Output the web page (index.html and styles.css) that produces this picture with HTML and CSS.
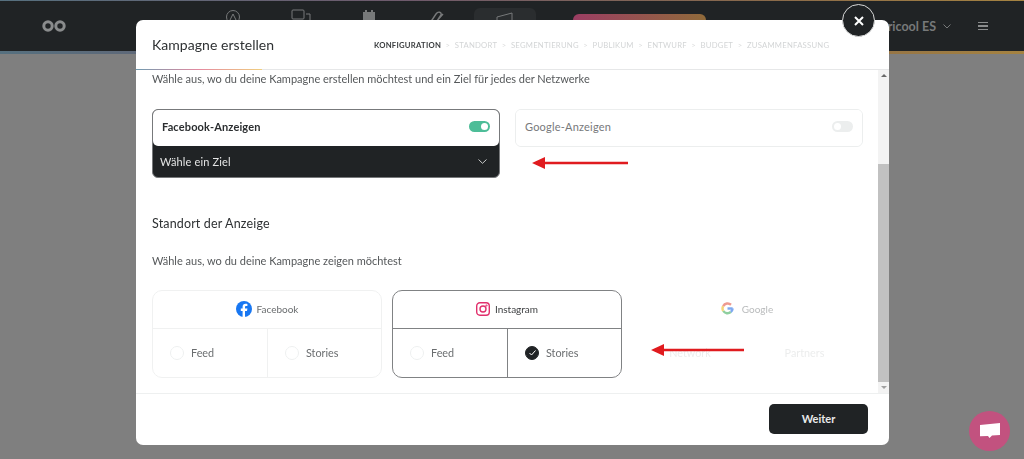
FILE: index.html
```html
<!DOCTYPE html>
<html lang="de">
<head>
    <meta charset="UTF-8">
    <meta name="viewport" content="width=device-width, initial-scale=1.0">
    <title>Kampagne erstellen</title>
    <link rel="stylesheet" href="styles.css">
</head>
<body>
    <header class="topbar">
        <svg class="logo" width="24" height="12" viewBox="0 0 24 12" fill="none" stroke="#8a8c8d" stroke-width="3"><circle cx="6" cy="6" r="4.2"/><circle cx="18" cy="6" r="4.2"/></svg>
        <nav class="topnav">
            <span class="nav-item"><svg width="16" height="16" viewBox="0 0 16 16" fill="none" stroke="#77797a"><circle cx="8" cy="8" r="6.5"/><path d="M5 11l3-6 3 6"/></svg></span>
            <span class="nav-item"><svg width="20" height="16" viewBox="0 0 20 16" fill="none" stroke="#77797a"><rect x="1" y="1" width="12" height="9" rx="1"/><path d="M15 5h4v8h-4"/></svg></span>
            <span class="nav-item"><svg width="14" height="16" viewBox="0 0 14 16" fill="#77797a"><path d="M1 3h12v12H1zM3 1h2v3H3zM9 1h2v3H9z"/></svg></span>
            <span class="nav-item"><svg width="20" height="16" viewBox="0 0 20 16" fill="none" stroke="#77797a" stroke-width="1.4"><path d="M3 14L9 5c2-3 6-2 5 1l-4 6M8 14l8-9"/></svg></span>
            <span class="nav-item active"><svg width="18" height="16" viewBox="0 0 18 16" fill="none" stroke="#77797a"><path d="M1 6l15-4v11L1 10z"/></svg></span>
        </nav>
        <div class="upgrade"></div>
        <div class="account">Metricool ES <svg width="8" height="5" viewBox="0 0 8 5" fill="none" stroke="#77797a"><path d="M0.5 0.5L4 4l3.5-3.5"/></svg></div>
        <div class="burger"><i></i><i></i><i></i></div>
    </header>

    <div class="overlay">
        <div class="modal">
            <button class="modal-close" aria-label="Schließen"><svg width="10" height="10" viewBox="0 0 10 10" stroke="#fff" stroke-width="2"><path d="M1 1l8 8M9 1L1 9"/></svg></button>
            <div class="modal-header">
                <h2 class="modal-title">Kampagne erstellen</h2>
                <ol class="steps">
                    <li class="current">Konfiguration</li>
                    <li>Standort</li>
                    <li>Segmentierung</li>
                    <li>Publikum</li>
                    <li>Entwurf</li>
                    <li>Budget</li>
                    <li>Zusammenfassung</li>
                </ol>
            </div>
            <div class="modal-body">
                <div class="modal-content">
                    <p class="hint first">Wähle aus, wo du deine Kampagne erstellen möchtest und ein Ziel für jedes der Netzwerke</p>

                    <div class="network-row">
                        <div class="ad-card on">
                            <div class="ad-head">
                                <strong>Facebook-Anzeigen</strong>
                                <span class="toggle on"></span>
                            </div>
                            <div class="ad-goal">
                                <span>Wähle ein Ziel</span>
                                <svg width="9" height="5" viewBox="0 0 9 5" fill="none" stroke="#c9caca" stroke-width="1"><path d="M0.5 0.5L4.500 4.300 8.500 0.500"/></svg>
                            </div>
                        </div>
                        <div class="ad-card">
                            <div class="ad-head off">
                                <span>Google-Anzeigen</span>
                                <span class="toggle"></span>
                            </div>
                        </div>
                    </div>

                    <h3 class="section-title">Standort der Anzeige</h3>
                    <p class="hint">Wähle aus, wo du deine Kampagne zeigen möchtest</p>

                    <div class="placement-row">
                        <div class="placement">
                            <div class="placement-head">
                                <svg width="16" height="16" viewBox="0 0 16 16"><circle cx="8" cy="8" r="8" fill="#1877f2"/><path d="M9 16V10h2l.4-2.4H9V6.2c0-.8.3-1.2 1.2-1.2h1.2V3c-.5-.1-1.100-.2-1.800-.2-1.900 0-3 1.100-3 3v1.800H4.800V10h1.800v6z" fill="#fff"/></svg>
                                <span>Facebook</span>
                            </div>
                            <div class="placement-opts">
                                <div class="opt"><span class="radio"></span>Feed</div>
                                <div class="opt"><span class="radio"></span>Stories</div>
                            </div>
                        </div>
                        <div class="placement selected">
                            <div class="placement-head">
                                <svg width="14" height="14" viewBox="0 0 14 14" fill="none" stroke="#e1306c" stroke-width="1.400"><rect x="0.700" y="0.700" width="12.600" height="12.600" rx="3.200"/><circle cx="7" cy="7" r="3"/><circle cx="10.500" cy="3.500" r="0.400"/></svg>
                                <span>Instagram</span>
                            </div>
                            <div class="placement-opts">
                                <div class="opt"><span class="radio"></span>Feed</div>
                                <div class="opt"><span class="radio checked"><svg width="7" height="6" viewBox="0 0 7 6" fill="none" stroke="#fff"><path d="M0.500 3l2 2 4-4.500"/></svg></span>Stories</div>
                            </div>
                        </div>
                        <div class="placement faded">
                            <div class="placement-head">
                                <svg width="13" height="13" viewBox="0 0 48 48" fill="none" stroke-width="9"><path d="M43 24H24" stroke="#7fa9f0"/><path d="M43 24a19 19 0 0 1-7 13" stroke="#7fa9f0"/><path d="M36 37A19 19 0 0 1 8 33" stroke="#8fcf9f"/><path d="M8 33a19 19 0 0 1 0-18" stroke="#f4d67a"/><path d="M8 15A19 19 0 0 1 37 10" stroke="#ee9a90"/></svg>
                                <span>Google</span>
                            </div>
                            <div class="placement-opts">
                                <div class="opt">Network</div>
                                <div class="opt">Partners</div>
                            </div>
                        </div>
                    </div>
                </div>
                <div class="scrollbar">
                    <span class="arrow up"></span>
                    <div class="scroll-track"><div class="scroll-thumb"></div></div>
                    <span class="arrow down"></span>
                </div>
                <svg class="red-arrow arrow-top" width="96" height="16" viewBox="0 0 96 16"><path d="M0 8L13 2v4.800h83v2.400H13V14z" fill="#e01b1f"/></svg>
                <svg class="red-arrow arrow-bottom" width="93" height="16" viewBox="0 0 93 16"><path d="M0 8L13 2v4.800h80v2.400H13V14z" fill="#e01b1f"/></svg>
            </div>
            <div class="modal-footer">
                <button class="btn-next">Weiter</button>
            </div>
        </div>
    </div>

    <button class="chat" aria-label="Chat"><svg width="20" height="17" viewBox="0 0 20 17" fill="#fff"><path d="M0 2l20-2v12l-8 .5L9.500 15 8 13l-8 .3z"/></svg></button>
</body>
</html>
```

FILE: styles.css
```css
:root {
    --dark: #202325;
    --text: #3f4143;
    --line: #eef0f0;
    --backdrop: #7f7f7f;
}

* {
    margin: 0;
    padding: 0;
    box-sizing: border-box;
    font-family: 'Lato', 'Noto Sans', sans-serif;
}

html, body {
    height: 100%;
    overflow: hidden;
}

body {
    background-color: var(--backdrop);
    color: var(--text);
}

/* bar behind the dialog, already dimmed */
.topbar {
    height: 54px;
    border-top: 1px solid #8a8a8a;
    border-bottom: 3px solid;
    border-image: linear-gradient(90deg, #56707f 0%, #6f5a6c 40%, #8a6a4a 75%, #a58341 100%) 1;
    background-color: #202325;
    display: flex;
    align-items: center;
    padding: 0 36px 0 42px;
}

.logo {
    flex-shrink: 0;
}

.topnav {
    display: flex;
    align-items: flex-start;
    margin-left: 133px;
    height: 50px;
}

.nav-item {
    width: 68px;
    height: 34px;
    padding-top: 8px;
    display: flex;
    align-items: flex-start;
    justify-content: center;
}

.nav-item.active {
    width: 62px;
    margin-left: 3px;
    margin-top: 7px;
    padding-top: 3px;
    background-color: #2a2d2f;
    border-radius: 6px;
}

.upgrade {
    width: 133px;
    height: 34px;
    margin-left: 37px;
    margin-top: 10px;
    border-radius: 6px;
    background: linear-gradient(90deg, #9b3d63, #8f6a3a);
}

.account {
    margin-left: auto;
    font-size: 12.500px;
    font-weight: 700;
    color: #77797a;
    display: flex;
    align-items: center;
    gap: 7px;
}

.burger {
    margin-left: 27px;
    width: 10px;
    display: flex;
    flex-direction: column;
    gap: 2px;
}

.burger i {
    display: block;
    height: 1.500px;
    background-color: #8a8c8d;
}

.overlay {
    position: fixed;
    top: 20px;
    left: 136px;
}

.modal {
    position: relative;
    width: 753px;
    height: 425px;
    background-color: white;
    border-radius: 7px;
    display: flex;
    flex-direction: column;
}

.modal-close {
    position: absolute;
    top: -16px;
    right: 14px;
    width: 33px;
    height: 33px;
    border-radius: 50%;
    border: 1px solid #d8d9d9;
    background-color: var(--dark);
    display: flex;
    align-items: center;
    justify-content: center;
}

.modal-header {
    height: 50px;
    flex-shrink: 0;
    padding: 0 16px;
    display: flex;
    align-items: center;
    position: relative;
    border-bottom: 1px solid #e6e7e8;
}

/* step progress */
.modal-header::after {
    content: '';
    position: absolute;
    left: 0;
    bottom: -1px;
    width: 126px;
    height: 1px;
    background: linear-gradient(90deg, #6f9bb0, #e58aa0 50%, #f0cf80);
}

.modal-title {
    font-size: 14px;
    font-weight: 400;
    color: #2e3133;
    width: 222px;
    letter-spacing: 0.05px;
}

.steps {
    list-style: none;
    display: flex;
    align-items: center;
    font-size: 7.700px;
    letter-spacing: 0.25px;
    text-transform: uppercase;
    color: #d3d5d6;
}

.steps li + li::before {
    content: '>';
    margin: 0 4.500px;
    color: #dcdddd;
}

.steps .current {
    font-weight: 700;
    color: #3a3d3f;
}

.modal-body {
    height: 323px;
    flex-shrink: 0;
    position: relative;
    display: flex;
}

.modal-content {
    flex: 1;
    min-width: 0;
    overflow: hidden;
    padding: 0 16px;
}

.hint {
    font-size: 11px;
    line-height: 16px;
    color: #55585a;
}

.hint.first {
    margin-top: 1px;
}

.network-row {
    display: grid;
    grid-template-columns: 348px 348px;
    gap: 15px;
    align-items: start;
    margin-top: 22px;
}

.ad-card {
    border: 1px solid #eceeee;
    border-radius: 6px;
    overflow: hidden;
}

.ad-card.on {
    border-color: #77797b;
    background-color: var(--dark);
}

.ad-head {
    height: 36px;
    padding: 0 9px 4px;
    background-color: white;
    border-radius: 0 0 5px 5px;
    display: flex;
    align-items: center;
    justify-content: space-between;
    font-size: 11px;
    color: #2b2e30;
}

.ad-head.off {
    color: #77797b;
    letter-spacing: 0.2px;
}

.ad-head strong {
    letter-spacing: 0.15px;
}

.toggle {
    width: 21px;
    height: 11px;
    border-radius: 6px;
    background-color: #eceeee;
    position: relative;
}

.toggle::after {
    content: '';
    position: absolute;
    top: 2px;
    left: 2px;
    width: 7px;
    height: 7px;
    border-radius: 50%;
    background-color: white;
}

.toggle.on {
    background-color: #4dbd98;
}

.toggle.on::after {
    left: 12px;
}

.ad-goal {
    height: 31px;
    padding: 0 12px 1px 7px;
    display: flex;
    align-items: center;
    justify-content: space-between;
    font-size: 11px;
    color: #e4e5e5;
    letter-spacing: 0.15px;
}

.section-title {
    font-size: 12.500px;
    font-weight: 400;
    line-height: 18px;
    color: #2e3133;
    margin-top: 37px;
    letter-spacing: 0.15px;
}

.section-title + .hint {
    margin-top: 20px;
}

.placement-row {
    display: grid;
    grid-template-columns: 230px 230px 230px;
    gap: 10px;
    margin-top: 21px;
}

.placement {
    height: 88px;
    border: 1px solid #f0f1f1;
    border-radius: 10px;
    display: flex;
    flex-direction: column;
    font-size: 10.800px;
    color: #6a6d6f;
}

.placement.selected {
    border-color: #808284;
}

.placement.faded {
    border-color: transparent;
    color: #b9bbbc;
}

.placement-head {
    height: 38px;
    flex-shrink: 0;
    padding-bottom: 2px;
    border-bottom: 1px solid #f0f1f1;
    display: flex;
    align-items: center;
    justify-content: center;
    gap: 5px;
    font-size: 10px;
}

.selected .placement-head {
    border-color: #808284;
    color: #3f4143;
}

.faded .placement-head {
    border-color: transparent;
    gap: 8px;
}

.placement-opts {
    flex: 1;
    display: grid;
    grid-template-columns: 114px 1fr;
}

.opt {
    display: flex;
    align-items: center;
    gap: 7px;
    padding: 0 0 1px 17px;
}

.opt + .opt {
    border-left: 1px solid #f0f1f1;
}

.selected .opt + .opt {
    border-color: #808284;
}

.faded .opt {
    color: #eceded;
    justify-content: center;
    padding-left: 0;
    gap: 0;
}

.faded .opt + .opt {
    border-color: transparent;
}

.radio {
    width: 14px;
    height: 14px;
    border-radius: 50%;
    border: 1px solid #eef0f0;
    display: flex;
    align-items: center;
    justify-content: center;
}

.radio.checked {
    background-color: var(--dark);
    border-color: var(--dark);
}

.scrollbar {
    width: 11px;
    flex-shrink: 0;
    background-color: #f3f3f3;
    display: flex;
    flex-direction: column;
    align-items: center;
}

.arrow {
    height: 11px;
    flex-shrink: 0;
    display: flex;
    align-items: center;
}

.arrow::after {
    content: '';
    border-left: 3px solid transparent;
    border-right: 3px solid transparent;
}

.arrow.up::after {
    border-bottom: 3px solid #6a6a6a;
}

.arrow.down::after {
    border-top: 3px solid #a0a0a0;
}

.scroll-track {
    flex: 1;
    width: 100%;
    display: flex;
    flex-direction: column;
    justify-content: flex-end;
}

.scroll-thumb {
    height: 218px;
    background-color: #c1c1c1;
}

/* annotations drawn on top of the screenshot */
.red-arrow {
    position: absolute;
}

.arrow-top {
    left: 396px;
    top: 85px;
}

.arrow-bottom {
    left: 515px;
    top: 272px;
}

.modal-footer {
    flex: 1;
    border-top: 1px solid var(--line);
    display: flex;
    align-items: center;
    justify-content: flex-end;
    padding: 0 21px 1px 0;
}

.btn-next {
    width: 99px;
    height: 30px;
    padding-bottom: 2px;
    border: none;
    border-radius: 5px;
    background-color: var(--dark);
    color: #e9eaea;
    font-size: 11px;
    font-weight: 700;
}

.chat {
    position: fixed;
    left: 969px;
    top: 411px;
    width: 41px;
    height: 40px;
    border: none;
    border-radius: 50%;
    background-color: #c2527f;
    display: flex;
    align-items: center;
    justify-content: center;
}
```
